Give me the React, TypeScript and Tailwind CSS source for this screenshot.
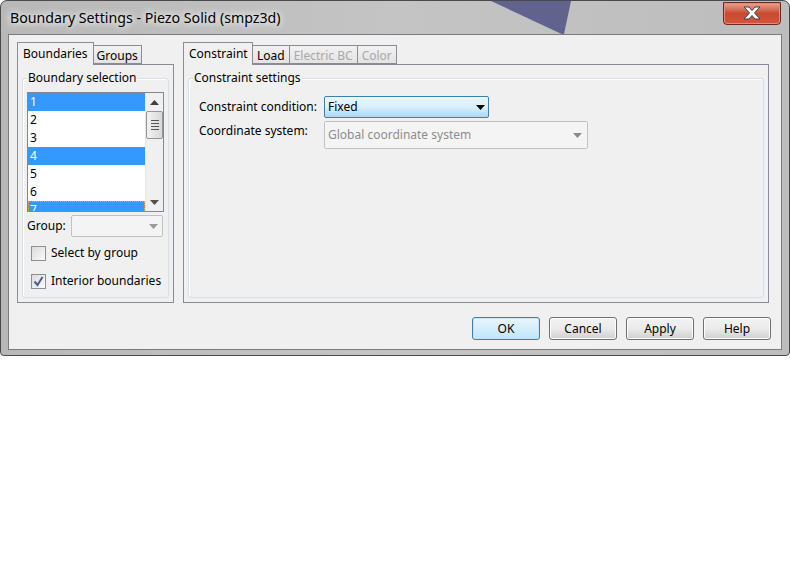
import React from "react";

const font = "font-['Noto_Sans',sans-serif]";

const Arrow = ({ color = "#505050" }: { color?: string }) => (
    <svg width="9" height="5" viewBox="0 0 9 5">
        <path d="M0 0h9L4.5 5z" fill={color} />
    </svg>
);

const UpArrow = () => (
    <svg width="9" height="5" viewBox="0 0 9 5">
        <path d="M0 5h9L4.5 0z" fill="#404040" />
    </svg>
);

type Tab = { label: string; active?: boolean; disabled?: boolean };

const TabPanel = ({ tabs, className, wide, children }: { tabs: Tab[]; className: string; wide?: boolean; children: React.ReactNode }) => (
    <div className={`flex flex-col ${className}`}>
        <div className="flex items-end h-[22px] relative z-10">
            {tabs.map((t) =>
                t.active ? (
                    <div
                        key={t.label}
                        className={`h-[23px] ${wide ? "px-[5px] w-[70px]" : "px-[5px]"} pt-[1px] border border-b-0 border-[#898c95] bg-[#f0f0f0] text-[12px] text-black leading-[19px] -mb-[1px]`}
                    >
                        {t.label}
                    </div>
                ) : (
                    <div
                        key={t.label}
                        className={`h-[19px] ${wide ? "px-[4px]" : "px-[3px]"} border border-l-0 border-[#898c95] bg-gradient-to-b from-[#f2f2f2] to-[#e3e3e3] text-[12px] leading-[19px] ${t.disabled ? "text-[#a8a8a8]" : "text-black"}`}
                    >
                        {t.label}
                    </div>
                )
            )}
        </div>
        <div className="flex-1 border border-[#898c95] bg-[#f0f0f0] p-[4px] pt-[13px]">{children}</div>
    </div>
);

const GroupBox = ({ title, className, children }: { title: string; className?: string; children: React.ReactNode }) => (
    <div className={`relative h-full border border-[#d5dfe5] rounded-[3px] shadow-[inset_1px_1px_0_#fff] ${className ?? ""}`}>
        <span className="absolute -top-[10px] left-[4px] bg-[#f0f0f0] px-[1px] text-[12px] leading-[18px] text-black whitespace-nowrap">{title}</span>
        {children}
    </div>
);

const Checkbox = ({ label, checked }: { label: string; checked?: boolean }) => (
    <div className="flex items-center gap-[5px] h-[16px]">
        <div className="w-[15px] h-[15px] shrink-0 border border-[#8f8f8f] bg-gradient-to-br from-[#dcdcdc] to-[#fafafa] flex items-center justify-center">
            {checked && (
                <svg width="11" height="11" viewBox="0 0 11 11">
                    <path d="M1.5 5.5l3 3.5L9.5 1" stroke="#4a5f97" strokeWidth="2" fill="none" />
                </svg>
            )}
        </div>
        <span className="text-[12px] text-black whitespace-nowrap">{label}</span>
    </div>
);

const Button = ({ label, primary }: { label: string; primary?: boolean }) => (
    <button
        className={`w-[68px] h-[23px] rounded-[3px] border text-[12px] text-black leading-[20px] ${
            primary
                ? "border-[#3c7fb1] bg-gradient-to-b from-[#eaf6fd] to-[#bee6fd] shadow-[inset_0_0_0_1px_#c4e5f6]"
                : "border-[#707070] bg-gradient-to-b from-[#f2f2f2] via-[#ebebeb] to-[#cfcfcf] shadow-[inset_0_0_0_1px_#fcfcfc]"
        }`}
    >
        {label}
    </button>
);

const items = ["1", "2", "3", "4", "5", "6", "7"];
const selected = ["1", "4", "7"];

export default function App() {
    return (
        <div className={`w-[790px] h-[576px] bg-white ${font}`}>
            <div className="relative w-[790px] h-[356px] rounded-t-[7px] rounded-b-[4px] border border-[#4a4a4a] bg-gradient-to-r from-[#b8b8b8] via-[#c4c4c4] to-[#bdbdbd] overflow-hidden flex flex-col px-[7px] pb-[5px]">
                {/* desktop showing through the glass */}
                <div className="absolute left-[490px] top-0 w-[80px] h-[34px] bg-[#62628f] [clip-path:polygon(0_0,100%_0,91%_100%)]" />
                <div className="relative h-[33px] flex items-center pl-[2px]">
                    <span className="text-[14.2px] text-black [text-shadow:0_0_8px_#fff,0_0_6px_#fff]">
                        Boundary Settings - Piezo Solid (smpz3d)
                    </span>
                    <div className="ml-auto mr-[1px] -mt-[9px] w-[58px] h-[23px] rounded-b-[4px] border border-[#6b2a20] bg-gradient-to-b from-[#e8a493] via-[#c74a30] to-[#d6553b] flex items-center justify-center shadow-[inset_0_0_0_1px_#e98a74]">
                        <svg width="22" height="14" viewBox="0 0 22 14">
                            <path d="M3 1h5l3 3.5L14 1h5l-5.5 6L19 13h-5l-3-3.5L8 13H3l5.5-6z" fill="#fff" stroke="#3d3d4a" strokeWidth="1" strokeLinejoin="round" />
                        </svg>
                    </div>
                </div>
                <div className="relative flex-1 border border-[#7b7b7b] bg-[#f0f0f0] flex flex-col pl-[8px] pr-[10px] pt-[7px] pb-[9px]">
                    <div className="flex gap-[9px] h-[261px]">
                        <TabPanel className="w-[157px]" tabs={[{ label: "Boundaries", active: true }, { label: "Groups" }]}>
                            <GroupBox title="Boundary selection">
                                <div className="flex flex-col gap-[3px] px-[4px] pt-[13px]">
                                    <div className="flex w-[137px] h-[120px] border border-[#828790] bg-white">
                                        <div className="flex-1 flex flex-col overflow-hidden">
                                            {items.map((i) => {
                                                const s = selected.includes(i);
                                                return (
                                                    <div
                                                        key={i}
                                                        className={`h-[18px] shrink-0 pl-[2px] text-[12px] leading-[18px] ${
                                                            s ? "bg-[#3399ff] text-white" : "text-black"
                                                        } ${i === "7" ? "outline outline-1 outline-dotted outline-[#e9a650] -outline-offset-1" : ""}`}
                                                    >
                                                        {i}
                                                    </div>
                                                );
                                            })}
                                        </div>
                                        <div className="w-[18px] border-l border-[#e6e6e6] bg-[#f0f0f0] flex flex-col items-center">
                                            <div className="h-[18px] flex items-center justify-center">
                                                <UpArrow />
                                            </div>
                                            <div className="w-[17px] h-[28px] rounded-[2px] border border-[#959595] bg-gradient-to-r from-[#f3f3f3] to-[#d8d8d8] flex flex-col items-center justify-center gap-[2px]">
                                                <div className="w-[8px] h-[1px] bg-[#555]" />
                                                <div className="w-[8px] h-[1px] bg-[#555]" />
                                                <div className="w-[8px] h-[1px] bg-[#555]" />
                                                <div className="w-[8px] h-[1px] bg-[#555]" />
                                            </div>
                                            <div className="mt-auto h-[18px] flex items-center justify-center">
                                                <Arrow />
                                            </div>
                                        </div>
                                    </div>
                                    <div className="flex items-center gap-[5px] h-[22px]">
                                        <span className="text-[12px] text-black">Group:</span>
                                        <div className="w-[92px] h-[22px] border border-[#c2c2c2] rounded-[2px] bg-[#f4f4f4] flex items-center justify-end pr-[4px]">
                                            <Arrow color="#9a9a9a" />
                                        </div>
                                    </div>
                                    <div className="flex flex-col gap-[12px] pl-[4px] pt-[5px]">
                                        <Checkbox label="Select by group" />
                                        <Checkbox label="Interior boundaries" checked />
                                    </div>
                                </div>
                            </GroupBox>
                        </TabPanel>
                        <TabPanel
                            className="w-[586px]"
                            wide
                            tabs={[
                                { label: "Constraint", active: true },
                                { label: "Load" },
                                { label: "Electric BC", disabled: true },
                                { label: "Color", disabled: true },
                            ]}
                        >
                            <GroupBox title="Constraint settings">
                                <div className="grid grid-cols-[125px_auto] items-center gap-y-[3px] pl-[10px] pt-[17px]">
                                    <span className="text-[12px] text-black">Constraint condition:</span>
                                    <div className="w-[165px] h-[22px] border border-[#3c7fb1] rounded-[2px] bg-gradient-to-b from-[#eaf6fd] via-[#d9f0fc] to-[#a7d9f5] flex items-center pl-[3px] pr-[3px]">
                                        <span className="flex-1 text-[12px] text-black">Fixed</span>
                                        <Arrow color="#000" />
                                    </div>
                                    <span className="text-[12px] text-black self-start pt-[1px]">Coordinate system:</span>
                                    <div className="w-[264px] h-[28px] border border-[#c2c2c2] rounded-[2px] bg-[#f4f4f4] flex items-center pl-[3px] pr-[5px]">
                                        <span className="flex-1 text-[12px] text-[#8d8d8d]">Global coordinate system</span>
                                        <Arrow color="#8a8a8a" />
                                    </div>
                                </div>
                            </GroupBox>
                        </TabPanel>
                    </div>
                    <div className="flex-1 flex items-end justify-end gap-[9px]">
                        <Button label="OK" primary />
                        <Button label="Cancel" />
                        <Button label="Apply" />
                        <Button label="Help" />
                    </div>
                </div>
            </div>
        </div>
    );
}
